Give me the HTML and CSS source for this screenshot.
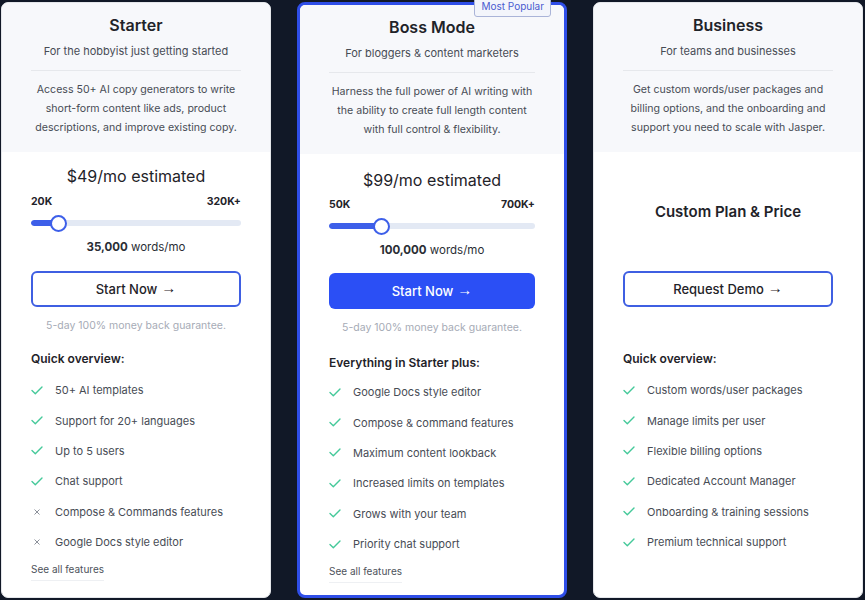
FILE: index.html
```html
<!DOCTYPE html>
<html lang="en">
<head>
<meta charset="utf-8">
<title>Pricing</title>
<link rel="stylesheet" href="styles.css">
</head>
<body>
<div class="plans">
  <section class="card">
    <div class="card-head">
      <h2 class="plan-name">Starter</h2>
      <p class="plan-tag">For the hobbyist just getting started</p>
      <hr class="divider">
      <p class="plan-desc">Access 50+ AI copy generators to write<br>short-form content like ads, product<br>descriptions, and improve existing copy.</p>
    </div>
    <div class="card-body">
      <div class="pricing">
        <div class="price">$49/mo estimated</div>
        <div class="range"><span>20K</span><span>320K+</span></div>
        <div class="slider">
          <div class="track"><div class="fill" style="width:12.9%"></div></div>
          <div class="thumb" style="left:12.9%"></div>
        </div>
        <div class="words"><b>35,000</b> words/mo</div>
      </div>
      <a class="btn btn-outline" href="#">Start Now <span class="arrow">→</span></a>
      <p class="guarantee">5-day 100% money back guarantee.</p>
      <h3 class="overview">Quick overview:</h3>
      <ul class="features">
        <li><span class="ico"><svg class="check" viewBox="0 0 12 9"><polyline points="1,4.6 4.3,7.8 11,1"/></svg></span>50+ AI templates</li>
        <li><span class="ico"><svg class="check" viewBox="0 0 12 9"><polyline points="1,4.6 4.3,7.8 11,1"/></svg></span>Support for 20+ languages</li>
        <li><span class="ico"><svg class="check" viewBox="0 0 12 9"><polyline points="1,4.6 4.3,7.8 11,1"/></svg></span>Up to 5 users</li>
        <li><span class="ico"><svg class="check" viewBox="0 0 12 9"><polyline points="1,4.6 4.3,7.8 11,1"/></svg></span>Chat support</li>
        <li><span class="ico"><svg class="cross" viewBox="0 0 6 6"><line x1="0.5" y1="0.5" x2="5.5" y2="5.5"/><line x1="5.5" y1="0.5" x2="0.5" y2="5.5"/></svg></span>Compose &amp; Commands features</li>
        <li><span class="ico"><svg class="cross" viewBox="0 0 6 6"><line x1="0.5" y1="0.5" x2="5.5" y2="5.5"/><line x1="5.5" y1="0.5" x2="0.5" y2="5.5"/></svg></span>Google Docs style editor</li>
      </ul>
      <a class="see-all" href="#">See all features</a>
    </div>
  </section>

  <section class="card card-featured">
    <span class="badge">Most Popular</span>
    <div class="card-head">
      <h2 class="plan-name">Boss Mode</h2>
      <p class="plan-tag">For bloggers &amp; content marketers</p>
      <hr class="divider">
      <p class="plan-desc">Harness the full power of AI writing with<br>the ability to create full length content<br>with full control &amp; flexibility.</p>
    </div>
    <div class="card-body">
      <div class="pricing">
        <div class="price">$99/mo estimated</div>
        <div class="range"><span>50K</span><span>700K+</span></div>
        <div class="slider">
          <div class="track"><div class="fill" style="width:25%"></div></div>
          <div class="thumb" style="left:25%"></div>
        </div>
        <div class="words"><b>100,000</b> words/mo</div>
      </div>
      <a class="btn btn-solid" href="#">Start Now <span class="arrow">→</span></a>
      <p class="guarantee">5-day 100% money back guarantee.</p>
      <h3 class="overview">Everything in Starter plus:</h3>
      <ul class="features">
        <li><span class="ico"><svg class="check" viewBox="0 0 12 9"><polyline points="1,4.6 4.3,7.8 11,1"/></svg></span>Google Docs style editor</li>
        <li><span class="ico"><svg class="check" viewBox="0 0 12 9"><polyline points="1,4.6 4.3,7.8 11,1"/></svg></span>Compose &amp; command features</li>
        <li><span class="ico"><svg class="check" viewBox="0 0 12 9"><polyline points="1,4.6 4.3,7.8 11,1"/></svg></span>Maximum content lookback</li>
        <li><span class="ico"><svg class="check" viewBox="0 0 12 9"><polyline points="1,4.6 4.3,7.8 11,1"/></svg></span>Increased limits on templates</li>
        <li><span class="ico"><svg class="check" viewBox="0 0 12 9"><polyline points="1,4.6 4.3,7.8 11,1"/></svg></span>Grows with your team</li>
        <li><span class="ico"><svg class="check" viewBox="0 0 12 9"><polyline points="1,4.6 4.3,7.8 11,1"/></svg></span>Priority chat support</li>
      </ul>
      <a class="see-all" href="#">See all features</a>
    </div>
  </section>

  <section class="card">
    <div class="card-head">
      <h2 class="plan-name">Business</h2>
      <p class="plan-tag">For teams and businesses</p>
      <hr class="divider">
      <p class="plan-desc">Get custom words/user packages and<br>billing options, and the onboarding and<br>support you need to scale with Jasper.</p>
    </div>
    <div class="card-body">
      <div class="pricing pricing-custom">
        <div class="custom-price">Custom Plan &amp; Price</div>
      </div>
      <a class="btn btn-outline" href="#">Request Demo <span class="arrow">→</span></a>
      <p class="guarantee"></p>
      <h3 class="overview">Quick overview:</h3>
      <ul class="features">
        <li><span class="ico"><svg class="check" viewBox="0 0 12 9"><polyline points="1,4.6 4.3,7.8 11,1"/></svg></span>Custom words/user packages</li>
        <li><span class="ico"><svg class="check" viewBox="0 0 12 9"><polyline points="1,4.6 4.3,7.8 11,1"/></svg></span>Manage limits per user</li>
        <li><span class="ico"><svg class="check" viewBox="0 0 12 9"><polyline points="1,4.6 4.3,7.8 11,1"/></svg></span>Flexible billing options</li>
        <li><span class="ico"><svg class="check" viewBox="0 0 12 9"><polyline points="1,4.6 4.3,7.8 11,1"/></svg></span>Dedicated Account Manager</li>
        <li><span class="ico"><svg class="check" viewBox="0 0 12 9"><polyline points="1,4.6 4.3,7.8 11,1"/></svg></span>Onboarding &amp; training sessions</li>
        <li><span class="ico"><svg class="check" viewBox="0 0 12 9"><polyline points="1,4.6 4.3,7.8 11,1"/></svg></span>Premium technical support</li>
      </ul>
    </div>
  </section>
</div>
</body>
</html>
```

FILE: styles.css
```css
* { box-sizing: border-box; }

html, body {
  margin: 0;
  padding: 0;
  height: 600px;
  overflow: hidden;
  background: #111827;
  font-family: Inter, "Noto Sans", "DejaVu Sans", sans-serif;
  color: #1f2329;
}

.plans {
  display: flex;
  gap: 26px;
  padding: 2px 0 0 1px;
  height: 600px;
}

.card {
  position: relative;
  flex: 0 0 270px;
  width: 270px;
  height: 596px;
  background: #ffffff;
  border-radius: 7px;
  border: 1px solid #e4e6ea;
}

.card-featured {
  border: 3px solid #2f4ee8;
  border-radius: 8px;
}

.card-head {
  background: #f7f8fb;
  padding: 10px 29px 15px;
  text-align: center;
  border-radius: 6px 6px 0 0;
}

.plan-name {
  margin: 0;
  font-size: 16px;
  line-height: 24px;
  font-weight: 600;
  color: #1f2329;
}

.plan-tag {
  margin: 5px 0 0;
  font-size: 11px;
  line-height: 18px;
  color: #474c55;
}

.divider {
  margin: 10px 0 0;
  border: 0;
  height: 1px;
  background: #e6e8ec;
}

.plan-desc {
  margin: 9px -4px 0;
  font-size: 10.6px;
  line-height: 19px;
  white-space: nowrap;
  color: #474c55;
}

.card-body {
  padding: 0 29px;
}

.pricing {
  height: 119px;
  padding-top: 13px;
  text-align: center;
}

.pricing-custom {
  padding-top: 0;
  display: flex;
  align-items: center;
  justify-content: center;
}

.custom-price {
  font-size: 15px;
  line-height: 20px;
  font-weight: 600;
  color: #1f2329;
}

.price {
  font-size: 16px;
  line-height: 22px;
  color: #1f2329;
}

.card-featured .price {
  margin-top: 2px;
}

.range {
  display: flex;
  justify-content: space-between;
  margin-top: 8px;
  font-size: 10.5px;
  line-height: 14px;
  font-weight: 700;
  color: #1f2329;
}

.card-featured .range {
  margin-top: 7px;
}

.slider {
  position: relative;
  height: 16px;
  margin-top: 6px;
  display: flex;
  align-items: center;
}

.track {
  width: 100%;
  height: 6px;
  border-radius: 3px;
  background: #e3e9f4;
  overflow: hidden;
}

.fill {
  height: 100%;
  background: #3d5fe9;
  border-radius: 3px;
}

.thumb {
  position: absolute;
  top: 0;
  width: 17px;
  height: 17px;
  margin-left: -8px;
  margin-top: -0.5px;
  border-radius: 50%;
  background: #ffffff;
  border: 2px solid #3d5fe9;
}

.words {
  margin-top: 8px;
  font-size: 11.5px;
  line-height: 16px;
  color: #2a2e35;
}

.words b { font-weight: 700; }

.btn {
  display: flex;
  align-items: center;
  justify-content: center;
  gap: 4px;
  height: 36px;
  border-radius: 6px;
  font-size: 13px;
  font-weight: 500;
  text-decoration: none;
}

.arrow {
  font-family: "Liberation Sans", Arial, sans-serif;
  font-weight: 400;
  font-size: 15px;
  line-height: 1;
  margin-bottom: 3px;
}

.btn-outline {
  border: 2px solid #3f5fe2;
  color: #1f2329;
  background: #ffffff;
}

.btn-solid {
  background: #2b4ff5;
  color: #ffffff;
  border: 0;
}

.guarantee {
  margin: 11px 0 0;
  height: 16px;
  font-size: 10.5px;
  line-height: 16px;
  text-align: center;
  color: #a6abb6;
}

.overview {
  margin: 17px 0 0;
  font-size: 12px;
  line-height: 16px;
  font-weight: 600;
  color: #1f2329;
}

.card-featured .overview {
  margin-top: 19px;
}

.features {
  list-style: none;
  margin: 8px 0 0;
  padding: 0;
}

.card-featured .features {
  margin-top: 6px;
}

.features li {
  display: flex;
  align-items: center;
  height: 30.4px;
  font-size: 11px;
  color: #474c55;
}

.ico {
  flex: 0 0 24px;
  display: flex;
  align-items: center;
}

.check {
  width: 12px;
  height: 9px;
  fill: none;
  stroke: #45c99a;
  stroke-width: 1.4;
  stroke-linecap: round;
  stroke-linejoin: round;
}

.cross {
  width: 6px;
  height: 6px;
  margin-left: 3px;
  stroke: #8c919b;
  stroke-width: 1;
}

.see-all {
  display: inline-block;
  margin-top: 3px;
  padding-bottom: 4px;
  font-size: 10px;
  line-height: 14px;
  color: #4d525b;
  text-decoration: none;
  border-bottom: 1px solid #eef0f3;
}

.badge {
  position: absolute;
  top: -9px;
  right: 13px;
  padding: 2px 6px 3px;
  font-size: 10px;
  line-height: 14px;
  color: #4a5bd0;
  background: #f3f5fb;
  border: 1px solid #aab4d8;
  border-radius: 3px;
  z-index: 2;
}
```
